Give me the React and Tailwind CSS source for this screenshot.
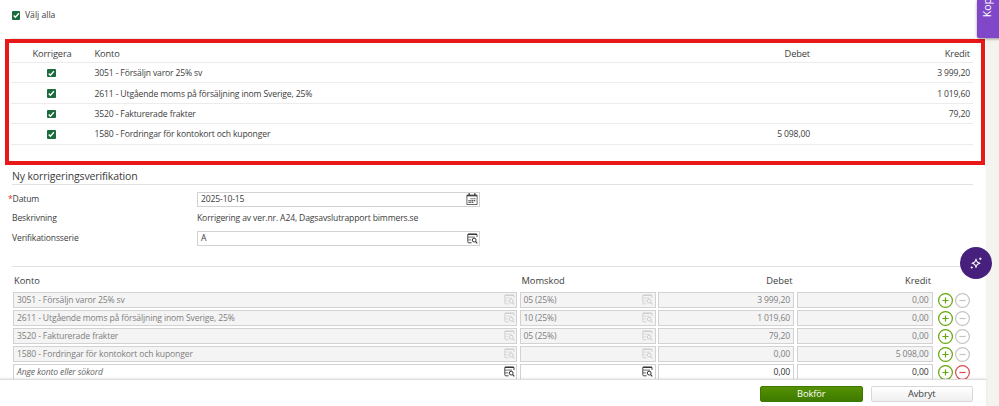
import { useState } from 'react';
import clsx from 'clsx';

const accounts = [
    { konto: '3051 - Försäljn varor 25% sv', moms: '05 (25%)', debet: '', kredit: '3 999,20' },
    { konto: '2611 - Utgående moms på försäljning inom Sverige, 25%', moms: '10 (25%)', debet: '', kredit: '1 019,60' },
    { konto: '3520 - Fakturerade frakter', moms: '05 (25%)', debet: '', kredit: '79,20' },
    { konto: '1580 - Fordringar för kontokort och kuponger', moms: '', debet: '5 098,00', kredit: '' },
];

// The correction swaps debit and credit
const corrections = accounts.map((a) => ({
    ...a,
    debet: a.kredit || '0,00',
    kredit: a.debet || '0,00',
    locked: true,
}));

const Checkbox = ({ checked, onClick }) => (
    <button role="checkbox" aria-checked={checked} onClick={onClick} className={clsx('block size-[8.5px] rounded-[1px]', checked ? 'bg-[#1b6b3c]' : 'bg-white border border-[#767676]')}>
        {checked && (
            <svg viewBox="0 0 8 8" className="block size-[8.5px]" fill="none" stroke="#fff" strokeWidth="1.3">
                <path d="M1.6 4.2 3.2 5.8 6.5 2.1" />
            </svg>
        )}
    </button>
);

const LookupIcon = ({ className }) => (
    <svg viewBox="0 0 11 11" className={clsx('block w-[11px] h-[11px] shrink-0', className)} fill="none" stroke="currentColor">
        <path d="M4.6 9.8H1.7Q.8 9.8.8 8.9V1.8Q.8 1 1.6 1H9.2Q10 1 10 1.8V4" strokeWidth=".9" />
        <path d="M.8 1.4H10" strokeWidth="1.1" />
        <path d="M1 4.1H8M1 6.9H4.2" strokeWidth=".7" />
        <circle cx="7.2" cy="7.1" r="1.9" strokeWidth="1" />
        <path d="M8.6 8.6 10.3 10.3" strokeWidth="1.2" />
    </svg>
);

const CalendarIcon = () => (
    <svg viewBox="0 0 12 12" className="block size-[12px] shrink-0 text-[#444]" fill="none" stroke="currentColor">
        <path d="M.9 2.2H11.1V11.5H.9Z" strokeWidth=".8" />
        <path d="M.9 2.6H11.1" strokeWidth="1.5" />
        <path d="M3.2 .3V2.6M8.8 .3V2.6" strokeWidth="1.5" />
        <path d="M4.5 5.8H9.8M2.5 7.6H9.8M2.5 9.4H7.9" strokeWidth="1.1" strokeDasharray="1.2 .6" />
    </svg>
);

const RoundIcon = ({ plus, className }) => (
    <svg viewBox="0 0 15 15" className={clsx('block size-[15px] shrink-0', className)} fill="none" stroke="currentColor" strokeWidth="1.2">
        <circle cx="7.5" cy="7.5" r="6.9" />
        <path d={plus ? 'M4.4 7.5H10.6M7.5 4.4V10.6' : 'M4.4 7.5H10.6'} />
    </svg>
);

const Field = ({ children, locked, icon, right, placeholder }) => (
    <div className={clsx('flex h-[15.5px] items-center border border-[#d2d2d2] px-[3px]', right && 'justify-end', locked ? 'bg-[#f4f4f4] text-[#808080]' : 'bg-white text-[#333]')}>
        <span className={clsx('whitespace-nowrap', !right && 'flex-1', placeholder && 'italic text-[#666]')}>{children}</span>
        {icon && <LookupIcon className={clsx('-mr-[1.5px]', locked ? 'text-[#cecece]' : 'text-[#333]')} />}
    </div>
);

const App = () => {
    const [selected, setSelected] = useState(accounts.map(() => true));
    const all = selected.every(Boolean);

    const toggle = (index) => setSelected(selected.map((s, i) => (i === index ? !s : s)));

    return (
        <div className="relative flex h-[406px] w-[999px] overflow-hidden bg-[#f4f3ef] font-['Open_Sans',sans-serif] text-[8.6px] leading-[12px] tracking-[-0.145px] text-[#3c3c3c]">
            <div className="flex w-[986px] flex-col bg-white">
                <main className="h-[379px] overflow-hidden">
                    <div className="mx-[11px] flex h-[39px] items-start gap-[5px] border-b border-[#e8e8e8] pl-[0.5px] pt-[9px]">
                        <div className="pt-[2px]">
                            <Checkbox checked={all} onClick={() => setSelected(selected.map(() => !all))} />
                        </div>
                        <span className="tracking-normal">Välj alla</span>
                    </div>

                    {/* Original voucher rows */}
                    <section className="ml-[5px] h-[126px] w-[980px] border-4 border-[#e81818] pl-[2px] pr-[8px]">
                        <div className="grid h-[20px] grid-cols-[80px_1fr_163px_160px] items-center border-b border-[#ececec] pr-[3px] pt-[3px] text-[9.3px]">
                            <span className="pl-[2px] text-center">Korrigera</span>
                            <span className="pl-[3.5px]">Konto</span>
                            <span className="text-right">Debet</span>
                            <span className="text-right">Kredit</span>
                        </div>
                        {accounts.map((row, i) => (
                            <div key={row.konto} className="grid h-[20.4px] grid-cols-[80px_1fr_163px_160px] items-center border-b border-[#ececec] pr-[3px] pt-[1px]">
                                <span className="flex justify-center pl-[1px]">
                                    <Checkbox checked={selected[i]} onClick={() => toggle(i)} />
                                </span>
                                <span className="pl-[3.5px]">{row.konto}</span>
                                <span className="text-right">{row.debet}</span>
                                <span className="text-right">{row.kredit}</span>
                            </div>
                        ))}
                    </section>

                    {/* New correction voucher */}
                    <section className="ml-[12px] mr-[13px]">
                        <h2 className="h-[20px] border-b border-[#e2e2e2] pt-[5px] text-[10.5px]">Ny korrigeringsverifikation</h2>
                        <div className="grid h-[82px] grid-cols-[185px_283px] content-start gap-y-[4px] border-b border-[#e2e2e2] pt-[6.5px]">
                            <span className="-ml-[4px] pt-[1.5px]"><span className="text-[#e03030]">*</span>Datum</span>
                            <div className="flex h-[15.5px] items-center justify-between border border-[#d2d2d2] pl-[3px] pr-[1px]">
                                <span>2025-10-15</span>
                                <CalendarIcon />
                            </div>
                            <span className="h-[15.5px] pt-[1px]">Beskrivning</span>
                            <span className="pt-[0.5px]">Korrigering av ver.nr. A24, Dagsavslutrapport bimmers.se</span>
                            <span className="pt-[1.5px]">Verifikationsserie</span>
                            <div className="flex h-[15.5px] items-center justify-between border border-[#d2d2d2] pl-[3px] pr-[1px]">
                                <span>A</span>
                                <LookupIcon className="text-[#333]" />
                            </div>
                        </div>
                    </section>

                    <section className="ml-[13px] w-[958px]">
                        <div className="grid h-[25px] grid-cols-[504px_136px_136px_136px] gap-x-[2.5px] pt-[8px] text-[9.3px] tracking-normal">
                            <span className="pl-[1px]">Konto</span>
                            <span className="pl-[2px]">Momskod</span>
                            <span className="pr-[1.5px] text-right">Debet</span>
                            <span className="pr-[1.5px] text-right">Kredit</span>
                        </div>
                        {[...corrections, { konto: 'Ange konto eller sökord', moms: '', debet: '0,00', kredit: '0,00', locked: false }].map((row) => (
                            <div key={row.konto} className="grid h-[18px] grid-cols-[504px_136px_136px_136px_auto] gap-x-[2.5px]">
                                <Field locked={row.locked} placeholder={!row.locked} icon>{row.konto}</Field>
                                <Field locked={row.locked} icon>{row.moms}</Field>
                                <Field locked={row.locked} right>{row.debet}</Field>
                                <Field locked={row.locked} right>{row.kredit}</Field>
                                <div className="flex gap-[2px] pl-[3px] pt-[0.5px]">
                                    <RoundIcon plus className="text-[#62a60a]" />
                                    <RoundIcon className={row.locked ? 'text-[#c4c4c4]' : 'text-[#dc4a50]'} />
                                </div>
                            </div>
                        ))}
                    </section>
                </main>

                <footer className="flex h-[27px] justify-end gap-[8px] border-t border-[#dcdcdc] pr-[13px] pt-[6px] shadow-[0_-1px_2px_rgba(0,0,0,0.08)]">
                    <button className="h-[16px] w-[102.5px] rounded-[2px] border border-[#3f7800] bg-linear-to-b from-[#549200] to-[#3f7a00] text-[9.3px] leading-[14px] tracking-[-0.1px] text-white">Bokför</button>
                    <button className="h-[16px] w-[102.5px] rounded-[2px] border border-[#d8d8d8] bg-linear-to-b from-white to-[#efefef] text-[9.3px] leading-[14px] tracking-[-0.1px]">Avbryt</button>
                </footer>
            </div>

            {/* Floating side tab */}
            <div className="absolute left-[977px] top-0 flex h-[37.5px] w-[30px] items-end rounded-bl-[2px] bg-[#8048c8] pb-[20px] pl-[4px] shadow-[0_1px_3px_rgba(0,0,0,0.4)]">
                <span className="rotate-180 text-[10.5px] leading-[12px] tracking-normal text-white [writing-mode:vertical-rl]">Kop</span>
            </div>

            <button className="absolute left-[960px] top-[247px] flex size-[32px] items-center justify-center rounded-full bg-[#46207c]">
                <svg viewBox="0 0 14 14" className="size-[14px]" fill="none" stroke="#fff" strokeWidth="1.1" strokeLinejoin="round">
                    <path d="M7 3Q7.4 6.6 11 7.2Q7.4 7.8 7 11.4Q6.6 7.8 3 7.2Q6.6 6.6 7 3Z" />
                    <path d="M11.3 1.5V4.1M10 2.8H12.6M2.7 10.4V12.6M1.6 11.5H3.8" strokeWidth=".9" />
                </svg>
            </button>
        </div>
    );
};

export default App;
